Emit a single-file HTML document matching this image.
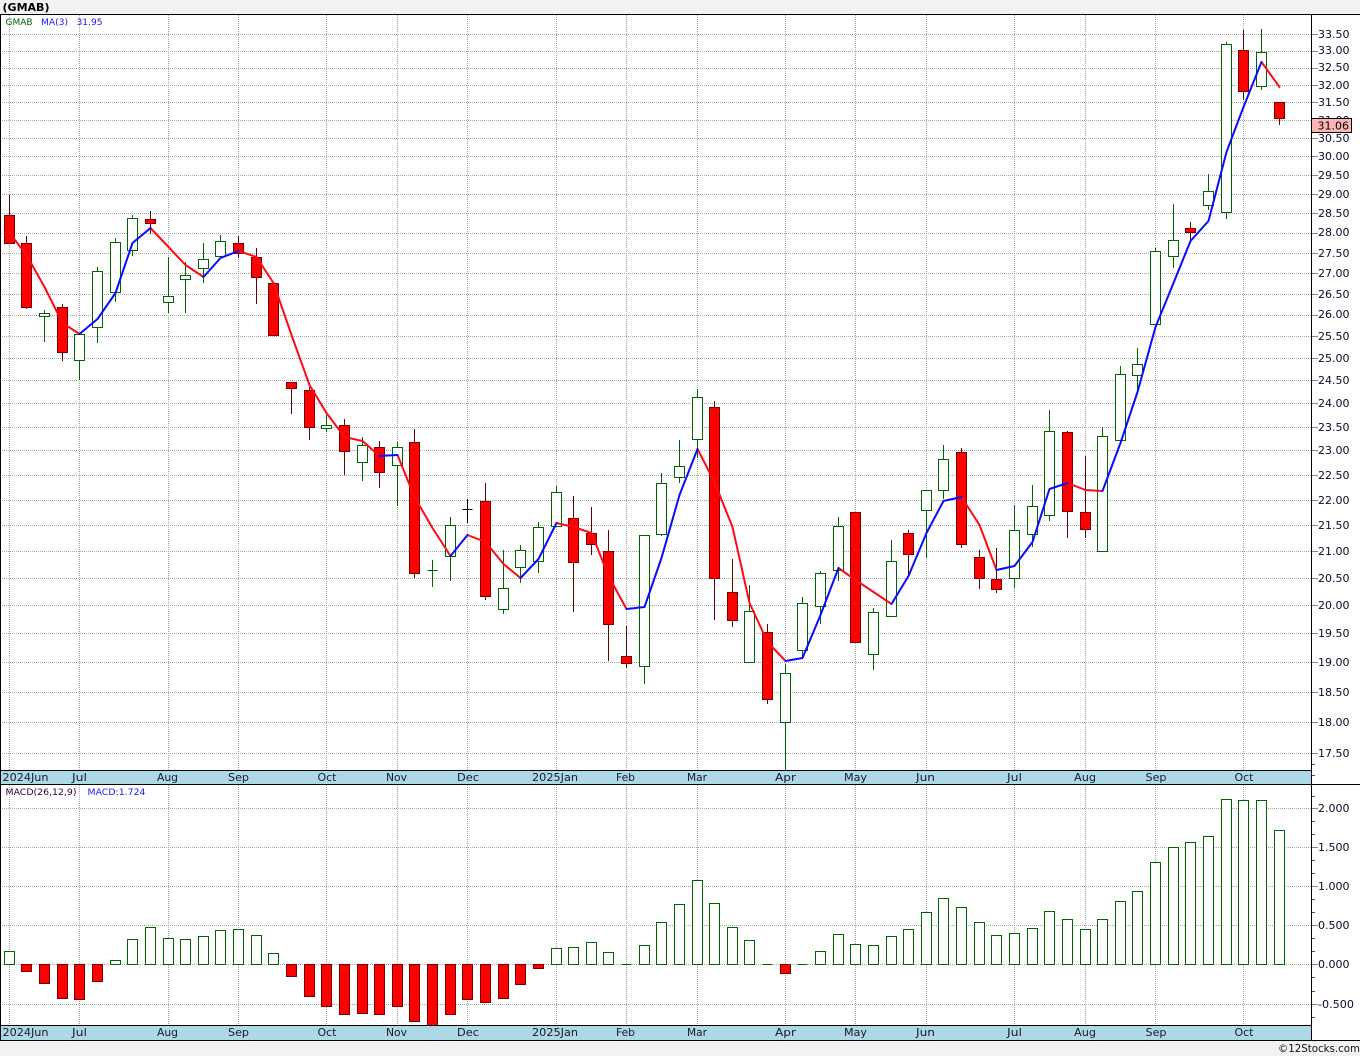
<!DOCTYPE html>
<html><head><meta charset="utf-8"><title>GMAB</title>
<style>
html,body{margin:0;padding:0;background:#f2f2f2}
svg{display:block}
text{font-family:"DejaVu Sans","Liberation Sans",sans-serif}
</style></head><body>
<svg width="1360" height="1056" viewBox="0 0 1360 1056" xmlns="http://www.w3.org/2000/svg">
<rect x="0" y="0" width="1360" height="1056" fill="#f2f2f2"/>
<rect x="0" y="14" width="1360" height="1026" fill="#fff"/>

<!-- grid -->
<g fill="none" stroke="#a6a6a6" stroke-width="1" stroke-dasharray="1 1" shape-rendering="crispEdges">
<path d="M2 34.5H1311M2 51.5H1311M2 68.5H1311M2 85.5H1311M2 102.5H1311M2 120.5H1311M2 138.5H1311M2 156.5H1311M2 175.5H1311M2 194.5H1311M2 213.5H1311M2 233.5H1311M2 253.5H1311M2 273.5H1311M2 294.5H1311M2 315.5H1311M2 336.5H1311M2 358.5H1311M2 380.5H1311M2 403.5H1311M2 427.5H1311M2 450.5H1311M2 475.5H1311M2 500.5H1311M2 525.5H1311M2 551.5H1311M2 578.5H1311M2 605.5H1311M2 633.5H1311M2 662.5H1311M2 692.5H1311M2 722.5H1311M2 753.5H1311"/>
<path d="M2 808.5H1311M2 847.5H1311M2 886.5H1311M2 925.5H1311M2 964.5H1311M2 1004.5H1311"/>
<path d="M9.5 15V770M79.5 15V770M168.5 15V770M238.5 15V770M326.5 15V770M397.5 15V770M467.5 15V770M556.5 15V770M626.5 15V770M697.5 15V770M785.5 15V770M855.5 15V770M926.5 15V770M1014.5 15V770M1085.5 15V770M1155.5 15V770M1243.5 15V770"/>
<path d="M9.5 785V1025M79.5 785V1025M168.5 785V1025M238.5 785V1025M326.5 785V1025M397.5 785V1025M467.5 785V1025M556.5 785V1025M626.5 785V1025M697.5 785V1025M785.5 785V1025M855.5 785V1025M926.5 785V1025M1014.5 785V1025M1085.5 785V1025M1155.5 785V1025M1243.5 785V1025"/>
</g>

<!-- wicks -->
<g fill="none" stroke-width="1" shape-rendering="crispEdges">
<path stroke="#660000" d="M9.5 195V243M26.5 236V309M62.5 304V361M150.5 211V234M238.5 236V258M256.5 248V304M273.5 283V335M291.5 382V414M309.5 387V440M344.5 419V475M379.5 441V488M414.5 429V578M485.5 483V600M573.5 496V612M591.5 507V555M608.5 530V661M626.5 626V668M714.5 401V620M732.5 559V627M767.5 624V704M855.5 512V642M908.5 530V577M961.5 448V548M979.5 550V589M996.5 548V593M1067.5 431V538M1085.5 456V538M1190.5 222V240M1243.5 30V100M1279.5 102V125"/>
<path stroke="#006400" d="M44.5 310V342M79.5 334V380M97.5 267V343M115.5 238V302M132.5 215V256M168.5 257V313M185.5 262V313M203.5 243V283M220.5 235V258M326.5 415V432M362.5 437V481M397.5 442V506M432.5 560V587M427.5 570.5H437.5M450.5 517V581M503.5 550V614M520.5 545V583M538.5 522V573M556.5 486V527M644.5 535V684M661.5 473V536M679.5 440V483M697.5 389V458M749.5 585V663M785.5 664V770M802.5 597V658M820.5 571V624M838.5 517V581M873.5 608V670M891.5 540V616M926.5 490V558M943.5 445V499M1014.5 505V588M1032.5 485V547M1049.5 410V521M1102.5 427V551M1120.5 366V440M1137.5 348V393M1155.5 248V325M1173.5 204V268M1208.5 174V210M1226.5 42V219M1261.5 29V90"/>
<path stroke="#000" d="M467.5 499V523M462.5 509.5H472.5"/>
</g>

<!-- candle bodies -->
<g stroke-width="1" shape-rendering="crispEdges">
<path fill="#f00" stroke="#7a0000" d="M4.5 215.5h10V243.5h-10zM21.5 243.5h10V307.5h-10zM57.5 307.5h10V352.5h-10zM145.5 219.5h10V223.5h-10zM233.5 243.5h10V253.5h-10zM251.5 257.5h10V277.5h-10zM268.5 283.5h10V335.5h-10zM286.5 382.5h10V388.5h-10zM304.5 390.5h10V427.5h-10zM339.5 425.5h10V451.5h-10zM374.5 447.5h10V472.5h-10zM409.5 442.5h10V573.5h-10zM480.5 501.5h10V596.5h-10zM568.5 518.5h10V562.5h-10zM586.5 533.5h10V544.5h-10zM603.5 551.5h10V624.5h-10zM621.5 656.5h10V663.5h-10zM709.5 407.5h10V578.5h-10zM727.5 592.5h10V620.5h-10zM762.5 632.5h10V699.5h-10zM850.5 512.5h10V642.5h-10zM903.5 533.5h10V554.5h-10zM956.5 452.5h10V544.5h-10zM974.5 557.5h10V578.5h-10zM991.5 579.5h10V589.5h-10zM1062.5 432.5h10V511.5h-10zM1080.5 512.5h10V529.5h-10zM1185.5 228.5h10V232.5h-10zM1238.5 50.5h10V91.5h-10zM1274.5 102.5h10V118.5h-10z"/>
<path fill="#fff" stroke="#006400" d="M39.5 313.5h10V316.5h-10zM74.5 334.5h10V360.5h-10zM92.5 271.5h10V327.5h-10zM110.5 242.5h10V292.5h-10zM127.5 218.5h10V250.5h-10zM163.5 296.5h10V302.5h-10zM180.5 275.5h10V279.5h-10zM198.5 259.5h10V268.5h-10zM215.5 241.5h10V256.5h-10zM321.5 425.5h10V428.5h-10zM357.5 445.5h10V462.5h-10zM392.5 447.5h10V465.5h-10zM445.5 525.5h10V556.5h-10zM498.5 588.5h10V609.5h-10zM515.5 550.5h10V567.5h-10zM533.5 527.5h10V561.5h-10zM551.5 492.5h10V526.5h-10zM639.5 535.5h10V666.5h-10zM656.5 483.5h10V534.5h-10zM674.5 466.5h10V477.5h-10zM692.5 397.5h10V439.5h-10zM744.5 611.5h10V662.5h-10zM780.5 673.5h10V722.5h-10zM797.5 603.5h10V650.5h-10zM815.5 573.5h10V606.5h-10zM833.5 526.5h10V570.5h-10zM868.5 612.5h10V654.5h-10zM886.5 561.5h10V616.5h-10zM921.5 490.5h10V510.5h-10zM938.5 459.5h10V490.5h-10zM1009.5 530.5h10V578.5h-10zM1027.5 506.5h10V534.5h-10zM1044.5 431.5h10V515.5h-10zM1097.5 436.5h10V551.5h-10zM1115.5 374.5h10V440.5h-10zM1132.5 364.5h10V375.5h-10zM1150.5 251.5h10V324.5h-10zM1168.5 240.5h10V256.5h-10zM1203.5 191.5h10V205.5h-10zM1221.5 44.5h10V212.5h-10zM1256.5 52.5h10V86.5h-10z"/>
</g>

<!-- MA line -->
<g fill="none" stroke-width="2" stroke-linejoin="round" stroke-linecap="round">
<path stroke="#ff0a14" d="M9.5 233L26.5 255L44.5 287L62.5 323L79.5 334M150.5 228L168.5 247L185.5 265L203.5 277M238.5 251L256.5 257L273.5 283L291.5 335L309.5 385L326.5 413L344.5 437L362.5 441L379.5 456M397.5 455L414.5 497L432.5 528L450.5 556M467.5 535L485.5 542L503.5 564L520.5 578M556.5 523L573.5 527L591.5 533L608.5 576L626.5 609M697.5 449L714.5 482L732.5 527L749.5 603L767.5 642L785.5 661M838.5 568L855.5 580L873.5 592L891.5 604M961.5 497L979.5 525L996.5 570M1067.5 483L1085.5 490L1102.5 491M1261.5 62L1279.5 87"/>
<path stroke="#0a0aff" d="M79.5 334L97.5 319L115.5 293L132.5 243L150.5 228M203.5 277L220.5 258L238.5 251M379.5 456L397.5 455M450.5 556L467.5 535M520.5 578L538.5 559L556.5 523M626.5 609L644.5 607L661.5 558L679.5 495L697.5 449M785.5 661L802.5 658L820.5 615L838.5 568M891.5 604L908.5 576L926.5 533L943.5 501L961.5 497M996.5 570L1014.5 566L1032.5 542L1049.5 489L1067.5 483M1102.5 491L1120.5 443L1137.5 392L1155.5 327L1173.5 283L1190.5 241L1208.5 221L1226.5 152L1243.5 107L1261.5 62"/>
</g>

<!-- MACD bars -->
<g stroke-width="1" shape-rendering="crispEdges">
<path fill="#f00" stroke="#7a0000" d="M21.5 964.5h10V971.5h-10zM39.5 964.5h10V983.5h-10zM57.5 964.5h10V998.5h-10zM74.5 964.5h10V999.5h-10zM92.5 964.5h10V981.5h-10zM286.5 964.5h10V976.5h-10zM304.5 964.5h10V996.5h-10zM321.5 964.5h10V1006.5h-10zM339.5 964.5h10V1014.5h-10zM357.5 964.5h10V1013.5h-10zM374.5 964.5h10V1014.5h-10zM392.5 964.5h10V1006.5h-10zM409.5 964.5h10V1021.5h-10zM427.5 964.5h10V1026.5h-10zM445.5 964.5h10V1014.5h-10zM462.5 964.5h10V999.5h-10zM480.5 964.5h10V1002.5h-10zM498.5 964.5h10V998.5h-10zM515.5 964.5h10V984.5h-10zM533.5 964.5h10V968.5h-10zM780.5 964.5h10V973.5h-10z"/>
<path fill="#fff" stroke="#006400" d="M4.5 951.5h10V964.5h-10zM110.5 960.5h10V964.5h-10zM127.5 939.5h10V964.5h-10zM145.5 927.5h10V964.5h-10zM163.5 938.5h10V964.5h-10zM180.5 939.5h10V964.5h-10zM198.5 936.5h10V964.5h-10zM215.5 930.5h10V964.5h-10zM233.5 929.5h10V964.5h-10zM251.5 935.5h10V964.5h-10zM268.5 953.5h10V964.5h-10zM551.5 948.5h10V964.5h-10zM568.5 947.5h10V964.5h-10zM586.5 942.5h10V964.5h-10zM603.5 952.5h10V964.5h-10zM621.5 964.5h10M639.5 945.5h10V964.5h-10zM656.5 922.5h10V964.5h-10zM674.5 904.5h10V964.5h-10zM692.5 880.5h10V964.5h-10zM709.5 903.5h10V964.5h-10zM727.5 927.5h10V964.5h-10zM744.5 940.5h10V964.5h-10zM762.5 964.5h10M797.5 964.5h10M815.5 951.5h10V964.5h-10zM833.5 934.5h10V964.5h-10zM850.5 944.5h10V964.5h-10zM868.5 945.5h10V964.5h-10zM886.5 936.5h10V964.5h-10zM903.5 929.5h10V964.5h-10zM921.5 912.5h10V964.5h-10zM938.5 898.5h10V964.5h-10zM956.5 907.5h10V964.5h-10zM974.5 922.5h10V964.5h-10zM991.5 935.5h10V964.5h-10zM1009.5 933.5h10V964.5h-10zM1027.5 928.5h10V964.5h-10zM1044.5 911.5h10V964.5h-10zM1062.5 919.5h10V964.5h-10zM1080.5 929.5h10V964.5h-10zM1097.5 919.5h10V964.5h-10zM1115.5 901.5h10V964.5h-10zM1132.5 891.5h10V964.5h-10zM1150.5 862.5h10V964.5h-10zM1168.5 847.5h10V964.5h-10zM1185.5 842.5h10V964.5h-10zM1203.5 836.5h10V964.5h-10zM1221.5 799.5h10V964.5h-10zM1238.5 800.5h10V964.5h-10zM1256.5 800.5h10V964.5h-10zM1274.5 830.5h10V964.5h-10z"/>
</g>

<!-- bands -->
<rect x="1" y="771" width="1310" height="13" fill="#add8e6"/>
<rect x="1" y="1026" width="1310" height="14" fill="#add8e6"/>
<rect x="0" y="1040.5" width="1360" height="16" fill="#f2f2f2"/>

<!-- axes -->
<g fill="none" stroke="#000" stroke-width="1" shape-rendering="crispEdges">
<path d="M0 14.5H1360M0 784.5H1360M0 770.5H1311.5M0 1025.5H1311.5M0 1040.5H1360M0.5 14V1040M1311.5 14V1040"/>
</g>
<g fill="none" stroke="#8a8a8a" stroke-width="1" shape-rendering="crispEdges">
<path d="M1312 34.5h6M1312 51.5h6M1312 68.5h6M1312 85.5h6M1312 102.5h6M1312 120.5h6M1312 138.5h6M1312 156.5h6M1312 175.5h6M1312 194.5h6M1312 213.5h6M1312 233.5h6M1312 253.5h6M1312 273.5h6M1312 294.5h6M1312 315.5h6M1312 336.5h6M1312 358.5h6M1312 380.5h6M1312 403.5h6M1312 427.5h6M1312 450.5h6M1312 475.5h6M1312 500.5h6M1312 525.5h6M1312 551.5h6M1312 578.5h6M1312 605.5h6M1312 633.5h6M1312 662.5h6M1312 692.5h6M1312 722.5h6M1312 753.5h6"/>
<path d="M1312 808.5h6M1312 847.5h6M1312 886.5h6M1312 925.5h6M1312 964.5h6M1312 1004.5h6"/>
<path stroke="#555" d="M1312 764.5h3M1312 775.5h3M1312 796.5h3M1312 821.5h3M1312 834.5h3M1312 860.5h3M1312 873.5h3M1312 899.5h3M1312 912.5h3M1312 938.5h3M1312 951.5h3M1312 977.5h3M1312 991.5h3M1312 1017.5h3"/>
</g>

<!-- title -->
<text x="2.5" y="11" font-size="11" font-weight="bold" fill="#000" textLength="47" lengthAdjust="spacingAndGlyphs">(GMAB)</text>
<text x="5.5" y="25" font-size="9" fill="#006400" textLength="27" lengthAdjust="spacingAndGlyphs">GMAB</text>
<text x="41" y="25" font-size="9" fill="#1a1aff" textLength="27" lengthAdjust="spacingAndGlyphs">MA(3)</text>
<text x="76.5" y="25" font-size="9" fill="#1a1aff" textLength="26" lengthAdjust="spacingAndGlyphs">31.95</text>
<text x="5.5" y="795" font-size="9" fill="#300030" textLength="71" lengthAdjust="spacingAndGlyphs">MACD(26,12,9)</text>
<text x="87.5" y="795" font-size="9" fill="#1a1aff" textLength="58" lengthAdjust="spacingAndGlyphs">MACD:1.724</text>

<!-- price labels -->
<g font-size="11" fill="#0a0a2a">
<text x="1318" y="38">33.50</text><text x="1318" y="54">33.00</text><text x="1318" y="71">32.50</text><text x="1318" y="89">32.00</text><text x="1318" y="106">31.50</text><text x="1318" y="124">31.00</text><text x="1318" y="142">30.50</text><text x="1318" y="160">30.00</text><text x="1318" y="179">29.50</text><text x="1318" y="198">29.00</text><text x="1318" y="217">28.50</text><text x="1318" y="236">28.00</text><text x="1318" y="257">27.50</text><text x="1318" y="277">27.00</text><text x="1318" y="298">26.50</text><text x="1318" y="318">26.00</text><text x="1318" y="340">25.50</text><text x="1318" y="362">25.00</text><text x="1318" y="384">24.50</text><text x="1318" y="407">24.00</text><text x="1318" y="431">23.50</text><text x="1318" y="454">23.00</text><text x="1318" y="479">22.50</text><text x="1318" y="504">22.00</text><text x="1318" y="529">21.50</text><text x="1318" y="555">21.00</text><text x="1318" y="582">20.50</text><text x="1318" y="609">20.00</text><text x="1318" y="637">19.50</text><text x="1318" y="666">19.00</text><text x="1318" y="696">18.50</text><text x="1318" y="726">18.00</text><text x="1318" y="757">17.50</text>
<text x="1318" y="812">2.000</text><text x="1318" y="851">1.500</text><text x="1318" y="890">1.000</text><text x="1318" y="929">0.500</text><text x="1318" y="968">0.000</text><text x="1318" y="1008" textLength="36" lengthAdjust="spacingAndGlyphs">-0.500</text>
</g>

<!-- last price tag -->
<rect x="1311.5" y="118.5" width="40" height="14" fill="#ffb4b4" stroke="#000" stroke-width="1" shape-rendering="crispEdges"/>
<text x="1317.5" y="129.5" font-size="11" fill="#000">31.06</text>

<!-- month labels -->
<g font-size="11" fill="#1a1a2a">
<text x="2.5" y="781" textLength="46" lengthAdjust="spacingAndGlyphs">2024Jun</text><text x="72" y="781" textLength="15" lengthAdjust="spacingAndGlyphs">Jul</text><text x="157" y="781" textLength="21" lengthAdjust="spacingAndGlyphs">Aug</text><text x="228" y="781" textLength="21" lengthAdjust="spacingAndGlyphs">Sep</text><text x="317.5" y="781" textLength="19" lengthAdjust="spacingAndGlyphs">Oct</text><text x="386" y="781" textLength="21" lengthAdjust="spacingAndGlyphs">Nov</text><text x="457" y="781" textLength="22" lengthAdjust="spacingAndGlyphs">Dec</text><text x="532" y="781" textLength="46" lengthAdjust="spacingAndGlyphs">2025Jan</text><text x="616" y="781" textLength="19" lengthAdjust="spacingAndGlyphs">Feb</text><text x="687" y="781" textLength="20" lengthAdjust="spacingAndGlyphs">Mar</text><text x="775" y="781" textLength="21" lengthAdjust="spacingAndGlyphs">Apr</text><text x="844" y="781" textLength="23" lengthAdjust="spacingAndGlyphs">May</text><text x="916" y="781" textLength="19" lengthAdjust="spacingAndGlyphs">Jun</text><text x="1007" y="781" textLength="15" lengthAdjust="spacingAndGlyphs">Jul</text><text x="1074" y="781" textLength="22" lengthAdjust="spacingAndGlyphs">Aug</text><text x="1145.5" y="781" textLength="21" lengthAdjust="spacingAndGlyphs">Sep</text><text x="1234.5" y="781" textLength="19" lengthAdjust="spacingAndGlyphs">Oct</text>
<text x="2.5" y="1036" textLength="46" lengthAdjust="spacingAndGlyphs">2024Jun</text><text x="72" y="1036" textLength="15" lengthAdjust="spacingAndGlyphs">Jul</text><text x="157" y="1036" textLength="21" lengthAdjust="spacingAndGlyphs">Aug</text><text x="228" y="1036" textLength="21" lengthAdjust="spacingAndGlyphs">Sep</text><text x="317.5" y="1036" textLength="19" lengthAdjust="spacingAndGlyphs">Oct</text><text x="386" y="1036" textLength="21" lengthAdjust="spacingAndGlyphs">Nov</text><text x="457" y="1036" textLength="22" lengthAdjust="spacingAndGlyphs">Dec</text><text x="532" y="1036" textLength="46" lengthAdjust="spacingAndGlyphs">2025Jan</text><text x="616" y="1036" textLength="19" lengthAdjust="spacingAndGlyphs">Feb</text><text x="687" y="1036" textLength="20" lengthAdjust="spacingAndGlyphs">Mar</text><text x="775" y="1036" textLength="21" lengthAdjust="spacingAndGlyphs">Apr</text><text x="844" y="1036" textLength="23" lengthAdjust="spacingAndGlyphs">May</text><text x="916" y="1036" textLength="19" lengthAdjust="spacingAndGlyphs">Jun</text><text x="1007" y="1036" textLength="15" lengthAdjust="spacingAndGlyphs">Jul</text><text x="1074" y="1036" textLength="22" lengthAdjust="spacingAndGlyphs">Aug</text><text x="1145.5" y="1036" textLength="21" lengthAdjust="spacingAndGlyphs">Sep</text><text x="1234.5" y="1036" textLength="19" lengthAdjust="spacingAndGlyphs">Oct</text>
</g>

<text x="1278" y="1052" font-size="11" fill="#111" textLength="82" lengthAdjust="spacingAndGlyphs">©12Stocks.com</text>
</svg>
</body></html>
